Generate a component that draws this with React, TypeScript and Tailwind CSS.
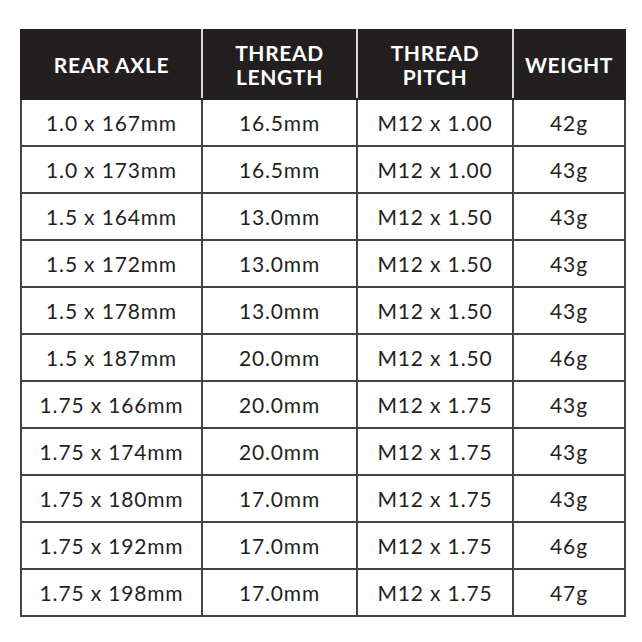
import React from 'react';

const rows = [
  ['1.0 x 167mm', '16.5mm', 'M12 x 1.00', '42g'],
  ['1.0 x 173mm', '16.5mm', 'M12 x 1.00', '43g'],
  ['1.5 x 164mm', '13.0mm', 'M12 x 1.50', '43g'],
  ['1.5 x 172mm', '13.0mm', 'M12 x 1.50', '43g'],
  ['1.5 x 178mm', '13.0mm', 'M12 x 1.50', '43g'],
  ['1.5 x 187mm', '20.0mm', 'M12 x 1.50', '46g'],
  ['1.75 x 166mm', '20.0mm', 'M12 x 1.75', '43g'],
  ['1.75 x 174mm', '20.0mm', 'M12 x 1.75', '43g'],
  ['1.75 x 180mm', '17.0mm', 'M12 x 1.75', '43g'],
  ['1.75 x 192mm', '17.0mm', 'M12 x 1.75', '46g'],
  ['1.75 x 198mm', '17.0mm', 'M12 x 1.75', '47g'],
];

const App = () => {
  return (
    <div className="w-[642px] h-[642px] bg-white pt-[29px] pl-[20px] font-['Lato',_sans-serif]">
      <table className="border-collapse table-fixed w-[604px]">
        <colgroup>
          <col className="w-[181px]" />
          <col className="w-[155px]" />
          <col className="w-[156px]" />
          <col className="w-[112px]" />
        </colgroup>
        <thead>
          <tr className="h-[69px] bg-[#231f20] text-white text-[21px] font-bold uppercase leading-[24px] tracking-[0.03em]">
            <th className="border-2 border-[#231f20] border-r-[#d8d8d8]">Rear Axle</th>
            <th className="border-2 border-[#231f20] border-r-[#d8d8d8]">Thread<br />Length</th>
            <th className="border-2 border-[#231f20] border-r-[#d8d8d8]">Thread<br />Pitch</th>
            <th className="border-2 border-[#231f20]">Weight</th>
          </tr>
        </thead>
        <tbody>
          {rows.map((r, i) => (
            <tr key={i} className="h-[47px] text-[21px] text-[#231f20] tracking-[0.04em]">
              {r.map((c, j) => (
                <td key={j} className="border-2 border-[#444] text-center align-middle p-0">
                  {c}
                </td>
              ))}
            </tr>
          ))}
        </tbody>
      </table>
    </div>
  );
};

export default App;
